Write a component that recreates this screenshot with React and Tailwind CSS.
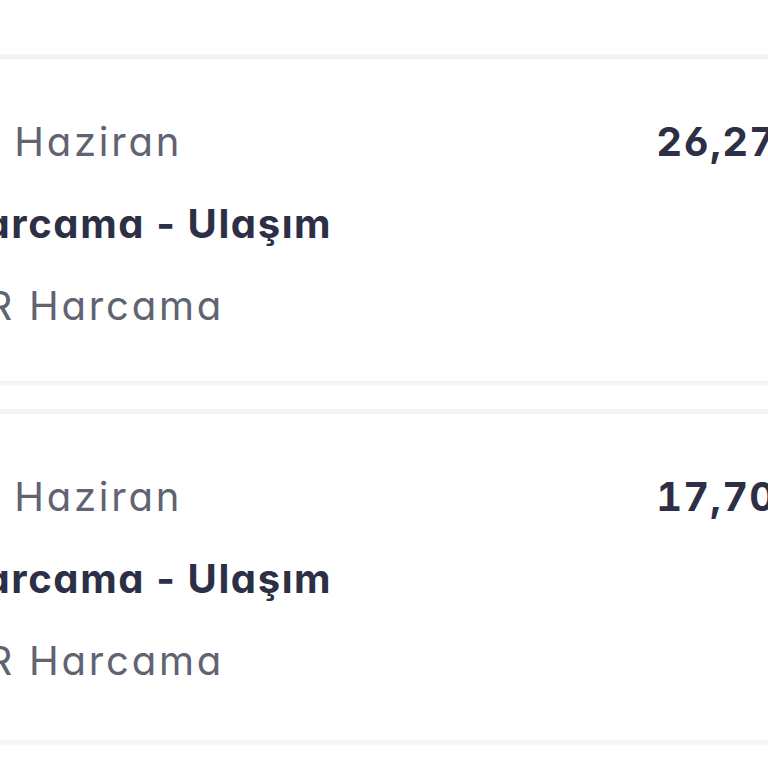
import React from "react";

const font = "font-['Inter',_'Noto_Sans',_sans-serif] [font-feature-settings:'cv11','ss01']";

function Card({ date, title, type, amount, pb }) {
  return (
    <div className="flex flex-col">
      <div className="h-[5px] bg-[linear-gradient(#f6f6f6,#efefef)]" />
      <div className={`flex justify-between pt-[59px] ${pb} pr-[17px] bg-white`}>
        <div className="flex flex-col gap-[34px]">
          <div className="text-[40px] leading-[48px] font-normal tracking-[2.8px] text-[#5f6372] whitespace-nowrap">{date}</div>
          <div className="text-[40px] leading-[48px] font-bold tracking-[1.6px] text-[#2c2f45] whitespace-nowrap">{title}</div>
          <div className="text-[40px] leading-[48px] font-normal tracking-[2.8px] text-[#5f6372] whitespace-nowrap">{type}</div>
        </div>
        <div className="text-[40px] leading-[48px] font-bold tracking-[1.2px] tabular-nums text-[#2c2f45] whitespace-nowrap">{amount}</div>
      </div>
      <div className="h-[5px] bg-[linear-gradient(#f2f2f2,#f8f8f8)]" />
    </div>
  );
}

export default function App() {
  return (
    <div className={`w-[768px] h-[768px] overflow-hidden bg-white ${font}`}>
      <div className="ml-[-47px] w-[904px] flex flex-col">
        <div className="h-[54px] bg-white" />
        <Card date="10 Haziran" title="Harcama - Ulaşım" type="QR Harcama" amount="26,27 TL" pb="pb-[51px]" />
        <div className="h-[23px] bg-white" />
        <Card date="10 Haziran" title="Harcama - Ulaşım" type="QR Harcama" amount="17,70 TL" pb="pb-[55px]" />
      </div>
    </div>
  );
}
